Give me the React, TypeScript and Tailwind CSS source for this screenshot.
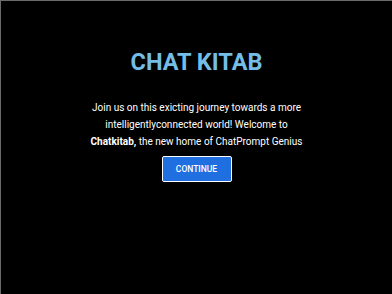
import React from 'react';

export default function App() {
  return (
    <div className="w-[392px] h-[294px] bg-black border-t border-l border-[#6b6b6b] flex flex-col items-center pt-[46px] font-['Roboto',sans-serif]">
      <h1 className="text-[23.5px] leading-[30px] font-bold text-[#74bde6]">CHAT KITAB</h1>
      <p className="mt-[22px] text-[10px] leading-[17px] text-white text-center w-[220px]">
        Join us on this exicting journey towards a more intelligentlyconnected world! Welcome to{' '}
        <span className="font-bold">Chatkitab,</span> the new home of ChatPrompt Genius
      </p>
      <button className="mt-[6px] w-[70px] h-[26px] bg-[#1f6fe0] border border-white rounded-[2px] text-white text-[8.5px] font-medium">
        CONTINUE
      </button>
    </div>
  );
}
